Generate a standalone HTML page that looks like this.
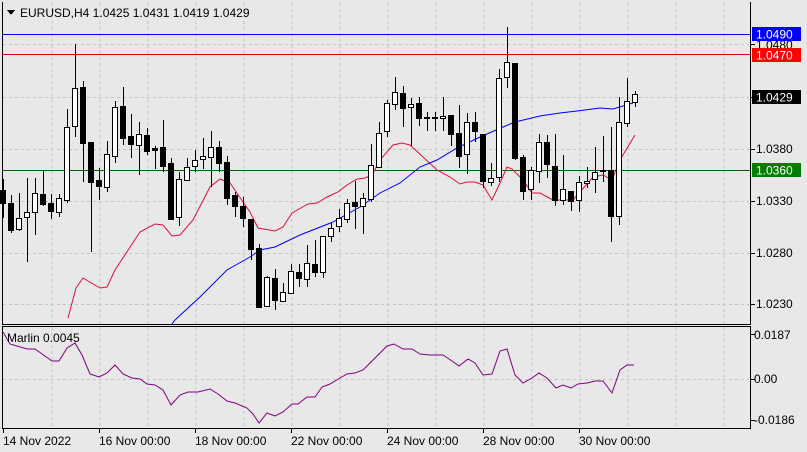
<!DOCTYPE html>
<html><head><meta charset="utf-8"><style>
html,body{margin:0;padding:0;background:#e8e8e8;}
svg{display:block;font-family:"Liberation Sans",sans-serif;font-size:12px;}
</style></head><body>
<svg width="807" height="452" xmlns="http://www.w3.org/2000/svg" shape-rendering="crispEdges">
<rect width="807" height="452" fill="#e8e8e8"/>
<g stroke="#c4c4c4" stroke-dasharray="3,3" stroke-width="1">
<path d="M52 3V324M100 3V324M148 3V324M196 3V324M244 3V324M292 3V324M340 3V324M388 3V324M436 3V324M484 3V324M532 3V324M580 3V324M628 3V324M676 3V324M724 3V324"/>
<path d="M52 327V428M100 327V428M148 327V428M196 327V428M244 327V428M292 327V428M340 327V428M388 327V428M436 327V428M484 327V428M532 327V428M580 327V428M628 327V428M676 327V428M724 327V428"/>
<path d="M3 44.5H750M3 97.5H750M3 149.5H750M3 201.5H750M3 253.5H750M3 304.5H750M3 379.5H750"/>
</g>
<g stroke-width="1">
<path d="M3 34.5H750" stroke="#0000ff"/>
<path d="M3 54.5H750" stroke="#e00000"/>
<path d="M3 170.5H750" stroke="#006400"/>
</g>
<g fill="none" stroke-width="1" shape-rendering="auto">
<polyline stroke="#e0103c" points="68,318 76,288 83,278 100,288 107,287 115,270 140,232 155,224 163,225 172,236 180,235 193,220 210,187 220,179 230,183 243,202 250,212 258,228 275,231 283,227 292,213 308,204 317,203 327,197 338,192 347,185 357,179 365,178 372,175 380,160 393,145 402,143 410,145 423,157 437,170 450,177 460,184 467,182 475,182 483,185 492,200 500,183 507,167 512,169 523,180 532,193 540,193 553,200 573,200 593,177 603,175 612,180 620,160 635,135"/>
<polyline stroke="#0000ff" points="172,324 175,320 200,297 227,270 250,257 260,250 275,247 300,235 333,222 360,207 380,193 400,183 420,167 437,160 457,148 480,137 503,127 515,122 540,116 560,113 577,111 600,108 613,109 633,103"/>
</g>
<g stroke="#000" stroke-width="1">
<path d="M3.5 179V218M11.5 195V233M19.5 193V231M27.5 178V262M35.5 178V235M43.5 170V206M51.5 194V219M59.5 194V217M67.5 109V203M75.5 44V137M83.5 81V182M91.5 142V252M99.5 168V200M107.5 141V192M115.5 101V163M123.5 87V145M131.5 114V158M139.5 122V175M147.5 128V155M155.5 146V169M163.5 120V172M171.5 158V220M179.5 172V226M187.5 158V180M195.5 150V172M203.5 138V169M211.5 131V187M219.5 141V172M227.5 156V205M235.5 192V217M243.5 197V227M251.5 219V260M259.5 244V308M267.5 276V307M275.5 269V310M283.5 283V302M291.5 264V294M299.5 264V287M307.5 245V287M315.5 240V277M323.5 236V278M331.5 223V242M339.5 209V232M347.5 199V223M355.5 181V229M363.5 193V234M371.5 144V202M379.5 122V168M387.5 100V137M395.5 77V110M403.5 86V127M411.5 98V146M419.5 97V126M427.5 112V131M435.5 112V131M443.5 97V131M451.5 115V146M459.5 105V168M467.5 113V174M475.5 112V142M483.5 134V188M491.5 163V186M499.5 69V182M507.5 27V88M515.5 63V160M523.5 155V200M531.5 167V200M539.5 134V183M547.5 135V178M555.5 134V206M563.5 155V205M571.5 191V211M579.5 176V212M587.5 167V188M595.5 147V193M603.5 136V182M611.5 127V242M619.5 97V225M627.5 78V127M635.5 91V107"/>
</g>
<g stroke="#000" stroke-width="1" fill="#000">
<rect x="0.5" y="190.5" width="5" height="13"/><rect x="8.5" y="203.5" width="5" height="27"/><rect x="40.5" y="194.5" width="5" height="10"/><rect x="48.5" y="203.5" width="5" height="8"/><rect x="80.5" y="87.5" width="5" height="56"/><rect x="88.5" y="142.5" width="5" height="40"/><rect x="96.5" y="180.5" width="5" height="6"/><rect x="120.5" y="106.5" width="5" height="32"/><rect x="128.5" y="136.5" width="5" height="8"/><rect x="144.5" y="135.5" width="5" height="16"/><rect x="152.5" y="148.5" width="5" height="2"/><rect x="160.5" y="147.5" width="5" height="19"/><rect x="168.5" y="163.5" width="5" height="56"/><rect x="216.5" y="147.5" width="5" height="16"/><rect x="224.5" y="162.5" width="5" height="36"/><rect x="232.5" y="195.5" width="5" height="11"/><rect x="240.5" y="206.5" width="5" height="12"/><rect x="248.5" y="219.5" width="5" height="30"/><rect x="256.5" y="248.5" width="5" height="59"/><rect x="272.5" y="278.5" width="5" height="22"/><rect x="296.5" y="272.5" width="5" height="6"/><rect x="312.5" y="264.5" width="5" height="8"/><rect x="352.5" y="202.5" width="5" height="4"/><rect x="400.5" y="93.5" width="5" height="15"/><rect x="416.5" y="103.5" width="5" height="15"/><rect x="424.5" y="117.5" width="5" height="1"/><rect x="432.5" y="117.5" width="5" height="1"/><rect x="448.5" y="115.5" width="5" height="19"/><rect x="456.5" y="133.5" width="5" height="23"/><rect x="472.5" y="122.5" width="5" height="9"/><rect x="480.5" y="134.5" width="5" height="47"/><rect x="512.5" y="63.5" width="5" height="95"/><rect x="520.5" y="157.5" width="5" height="34"/><rect x="544.5" y="142.5" width="5" height="22"/><rect x="552.5" y="166.5" width="5" height="34"/><rect x="568.5" y="191.5" width="5" height="10"/><rect x="600.5" y="170.5" width="5" height="1"/><rect x="608.5" y="170.5" width="5" height="46"/>
</g>
<g stroke="#000" stroke-width="1" fill="#fff">
<rect x="16.5" y="218.5" width="5" height="11"/><rect x="24.5" y="212.5" width="5" height="5"/><rect x="32.5" y="193.5" width="5" height="19"/><rect x="56.5" y="198.5" width="5" height="14"/><rect x="64.5" y="127.5" width="5" height="73"/><rect x="72.5" y="88.5" width="5" height="38"/><rect x="104.5" y="154.5" width="5" height="33"/><rect x="112.5" y="107.5" width="5" height="49"/><rect x="136.5" y="134.5" width="5" height="11"/><rect x="176.5" y="179.5" width="5" height="38"/><rect x="184.5" y="167.5" width="5" height="13"/><rect x="192.5" y="160.5" width="5" height="6"/><rect x="200.5" y="156.5" width="5" height="3"/><rect x="208.5" y="147.5" width="5" height="10"/><rect x="264.5" y="277.5" width="5" height="29"/><rect x="280.5" y="292.5" width="5" height="9"/><rect x="288.5" y="271.5" width="5" height="22"/><rect x="304.5" y="263.5" width="5" height="16"/><rect x="320.5" y="236.5" width="5" height="36"/><rect x="328.5" y="228.5" width="5" height="8"/><rect x="336.5" y="218.5" width="5" height="8"/><rect x="344.5" y="203.5" width="5" height="16"/><rect x="360.5" y="198.5" width="5" height="8"/><rect x="368.5" y="165.5" width="5" height="34"/><rect x="376.5" y="133.5" width="5" height="34"/><rect x="384.5" y="103.5" width="5" height="28"/><rect x="392.5" y="92.5" width="5" height="12"/><rect x="408.5" y="104.5" width="5" height="3"/><rect x="440.5" y="116.5" width="5" height="2"/><rect x="464.5" y="122.5" width="5" height="32"/><rect x="488.5" y="178.5" width="5" height="4"/><rect x="496.5" y="78.5" width="5" height="99"/><rect x="504.5" y="62.5" width="5" height="15"/><rect x="528.5" y="170.5" width="5" height="19"/><rect x="536.5" y="142.5" width="5" height="29"/><rect x="560.5" y="189.5" width="5" height="11"/><rect x="576.5" y="182.5" width="5" height="18"/><rect x="584.5" y="181.5" width="5" height="2"/><rect x="592.5" y="172.5" width="5" height="7"/><rect x="616.5" y="122.5" width="5" height="94"/><rect x="624.5" y="101.5" width="5" height="22"/><rect x="632.5" y="94.5" width="5" height="8"/>
</g>
<polyline fill="none" stroke="#800080" stroke-width="1" shape-rendering="auto" points="3,332 10,344 27,349 35,349 52,361 59,361 67,348 75,343 82,355 90,374 99,377 107,373 115,365 123,374 132,378 140,379 147,384 155,385 163,390 171,405 180,395 188,392 198,392 210,389 218,394 227,401 235,403 247,408 253,414 259,423 267,413 275,416 283,412 292,404 298,404 307,397 315,397 322,387 330,384 340,378 347,374 355,373 363,370 370,363 387,346 394,344 403,349 412,349 420,354 430,355 443,355 452,361 459,366 468,359 475,363 483,375 492,374 500,351 507,349 515,375 523,383 532,378 539,373 547,378 556,388 563,385 571,388 578,384 587,383 595,381 603,381 612,393 620,370 627,365 634,365"/>
<g fill="none" stroke="#000" stroke-width="1">
<path d="M2.5 2V324.5H750.5V2"/>
<path d="M2.5 326.5H750.5V428.5H2.5Z"/>
<path d="M750 44.5H755M750 97.5H755M750 149.5H755M750 201.5H755M750 253.5H755M750 304.5H755M750 334.5H755M750 379.5H755M750 420.5H755"/>
<path d="M3.5 428V433M99.5 428V433M195.5 428V433M291.5 428V433M387.5 428V433M483.5 428V433M579.5 428V433"/>
</g>
<path d="M7 10H15L11 15Z" fill="#000"/>
<text x="20" y="17" fill="#000">EURUSD,H4  1.0425 1.0431 1.0419 1.0429</text>
<text x="7" y="342" fill="#000">Marlin 0.0045</text>
<g fill="#000">
<text x="756" y="49">1.0480</text>
<text x="756" y="153">1.0380</text>
<text x="756" y="205">1.0330</text>
<text x="756" y="257">1.0280</text>
<text x="756" y="308">1.0230</text>
<text x="754" y="339">0.0187</text>
<text x="754" y="383">0.00</text>
<text x="754" y="424">-0.0186</text>
</g>
<rect x="752" y="27" width="49" height="14" fill="#0000ff"/>
<text x="756" y="38.5" fill="#fff">1.0490</text>
<rect x="752" y="48" width="49" height="14" fill="#ff0000"/>
<text x="756" y="59.5" fill="#fff">1.0470</text>
<rect x="752" y="90" width="49" height="14" fill="#000"/>
<text x="756" y="101.5" fill="#fff">1.0429</text>
<rect x="752" y="163" width="49" height="14" fill="#008000"/>
<text x="756" y="174.5" fill="#fff">1.0360</text>
<g fill="#000">
<text x="3" y="445">14 Nov 2022</text>
<text x="99" y="445">16 Nov 00:00</text>
<text x="195" y="445">18 Nov 00:00</text>
<text x="291" y="445">22 Nov 00:00</text>
<text x="387" y="445">24 Nov 00:00</text>
<text x="483" y="445">28 Nov 00:00</text>
<text x="579" y="445">30 Nov 00:00</text>
</g>
</svg>
</body></html>
